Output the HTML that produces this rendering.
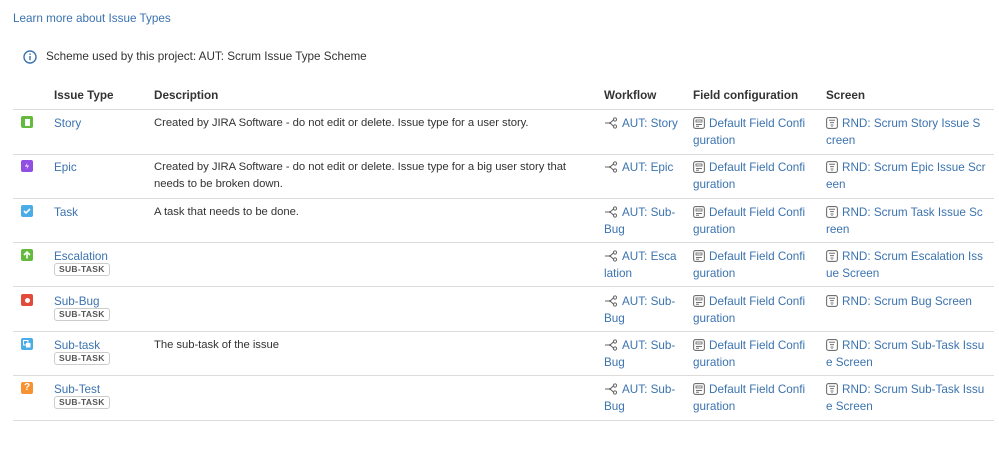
<!DOCTYPE html>
<html><head><meta charset="utf-8"><style>
body{margin:0;width:999px;height:464px;background:#fff;font-family:"Liberation Sans",Arial,sans-serif;font-size:11.7px;color:#333;position:relative;overflow:hidden}
a{color:#3b73af;text-decoration:none}
.abs{position:absolute}
.row{position:absolute;left:13px;width:981px;border-bottom:1px solid #dcdcdc;height:44px}
.c{position:absolute;top:5px;line-height:17px}
.hd{font-weight:bold;color:#333}
.ic{position:absolute;left:8px;top:6px;width:12px;height:12px;border-radius:2px}
.lz{position:absolute;left:41px;top:20px;font-size:8.5px;font-weight:bold;color:#555;border:1px solid #ccc;border-radius:3px;padding:0 4px;line-height:11px;letter-spacing:.3px}
.d{font-size:11.3px;letter-spacing:-0.05px}
.wf{left:591px;width:82px}
.fc{left:680px;width:120px}
.sc{left:813px;width:164px}
.ico{display:inline-block;vertical-align:-2px;margin-right:4px}
</style></head><body>
<div class="abs" style="left:13px;top:10px;line-height:17px"><a>Learn more about Issue Types</a></div>
<svg class="abs" style="left:23px;top:50px" width="14" height="14" viewBox="0 0 14 14"><circle cx="7" cy="7" r="6" fill="none" stroke="#3b73af" stroke-width="1.4"/><rect x="6.3" y="6" width="1.4" height="4.2" fill="#3b73af"/><rect x="6.3" y="3.5" width="1.4" height="1.4" fill="#3b73af"/></svg>
<div class="abs" style="left:46px;top:48px;line-height:17px">Scheme used by this project: AUT: Scrum Issue Type Scheme</div>
<div class="row" style="top:65px;height:44px">
<div class="c hd" style="left:41px;top:22px">Issue Type</div>
<div class="c hd" style="left:141px;top:22px">Description</div>
<div class="c hd" style="left:591px;top:22px">Workflow</div>
<div class="c hd" style="left:680px;top:22px">Field configuration</div>
<div class="c hd" style="left:813px;top:22px">Screen</div>
</div>

<svg width="0" height="0" style="position:absolute"><defs>
<symbol id="wf" viewBox="0 0 14 12"><path d="M1 6h5M6 6l4-3.5M6 6l4 3.5" stroke="#666" stroke-width="1.1" fill="none"/><circle cx="11" cy="2.5" r="1.6" fill="none" stroke="#666"/><circle cx="11" cy="9.5" r="1.6" fill="none" stroke="#666"/><circle cx="6" cy="6" r="1" fill="#666"/></symbol>
<symbol id="fc" viewBox="0 0 12 12"><rect x=".6" y=".6" width="10.8" height="10.8" rx="2" fill="none" stroke="#707070" stroke-width="1.1"/><rect x="3" y="3" width="6" height="2" fill="none" stroke="#707070" stroke-width=".9"/><path d="M3 7.5h6M3 9.3h3" stroke="#707070" stroke-width="1"/></symbol>
<symbol id="sc" viewBox="0 0 12 12"><rect x=".6" y=".6" width="10.8" height="10.8" rx="2" fill="none" stroke="#707070" stroke-width="1.1"/><path d="M3 3.2h6M4 5.6h4M4.5 8h3M5.5 9.5h1" stroke="#707070" stroke-width="1"/></symbol>
</defs></svg>

<div class="row" style="top:110px">
<div class="ic" style="background:#63ba3c"><div style="position:absolute;left:3.5px;top:2.5px;width:5px;height:7px;background:#fff"></div></div>
<div class="c" style="left:41px"><a>Story</a></div>
<div class="c d" style="left:141px">Created by JIRA Software - do not edit or delete. Issue type for a user story.</div>
<div class="c wf"><a><svg class="ico" width="14" height="12"><use href="#wf"/></svg>AUT: Story</a></div>
<div class="c fc"><a><svg class="ico" width="12" height="12"><use href="#fc"/></svg>Default Field Confi guration</a></div>
<div class="c sc"><a><svg class="ico" width="12" height="12"><use href="#sc"/></svg>RND: Scrum Story Issue S creen</a></div>
</div>

<div class="row" style="top:154px;height:44px">
<div class="ic" style="background:#904ee2"><svg width="12" height="12" style="position:absolute"><path d="M6.5 2.5L4 6.5h2.5L5.5 9.5 8 5.5H5.5z" fill="#fff"/></svg></div>
<div class="c" style="left:41px"><a>Epic</a></div>
<div class="c d" style="left:141px;width:440px">Created by JIRA Software - do not edit or delete. Issue type for a big user story that needs to be broken down.</div>
<div class="c wf"><a><svg class="ico" width="14" height="12"><use href="#wf"/></svg>AUT: Epic</a></div>
<div class="c fc"><a><svg class="ico" width="12" height="12"><use href="#fc"/></svg>Default Field Confi guration</a></div>
<div class="c sc"><a><svg class="ico" width="12" height="12"><use href="#sc"/></svg>RND: Scrum Epic Issue Scr een</a></div>
</div>

<div class="row" style="top:199px;height:43px">
<div class="ic" style="background:#4bade8"><svg width="12" height="12" style="position:absolute"><path d="M3 6l2 2 4-4" stroke="#fff" stroke-width="1.6" fill="none"/></svg></div>
<div class="c" style="left:41px"><a>Task</a></div>
<div class="c d" style="left:141px">A task that needs to be done.</div>
<div class="c wf"><a><svg class="ico" width="14" height="12"><use href="#wf"/></svg>AUT: Sub-Bug</a></div>
<div class="c fc"><a><svg class="ico" width="12" height="12"><use href="#fc"/></svg>Default Field Confi guration</a></div>
<div class="c sc"><a><svg class="ico" width="12" height="12"><use href="#sc"/></svg>RND: Scrum Task Issue Sc reen</a></div>
</div>

<div class="row" style="top:243px;height:43px">
<div class="ic" style="background:#63ba3c"><svg width="12" height="12" style="position:absolute"><path d="M6 9.5V3M3 6l3-3 3 3" stroke="#fff" stroke-width="1.6" fill="none"/></svg></div>
<div class="c" style="left:41px"><a>Escalation</a></div><div class="lz">SUB-TASK</div>
<div class="c wf"><a><svg class="ico" width="14" height="12"><use href="#wf"/></svg>AUT: Esca lation</a></div>
<div class="c fc"><a><svg class="ico" width="12" height="12"><use href="#fc"/></svg>Default Field Confi guration</a></div>
<div class="c sc"><a><svg class="ico" width="12" height="12"><use href="#sc"/></svg>RND: Scrum Escalation Iss ue Screen</a></div>
</div>

<div class="row" style="top:288px;height:43px">
<div class="ic" style="background:#e5493a"><div style="position:absolute;left:3.5px;top:3.5px;width:5px;height:5px;border-radius:50%;background:#fff"></div></div>
<div class="c" style="left:41px"><a>Sub-Bug</a></div><div class="lz">SUB-TASK</div>
<div class="c wf"><a><svg class="ico" width="14" height="12"><use href="#wf"/></svg>AUT: Sub-Bug</a></div>
<div class="c fc"><a><svg class="ico" width="12" height="12"><use href="#fc"/></svg>Default Field Confi guration</a></div>
<div class="c sc"><a><svg class="ico" width="12" height="12"><use href="#sc"/></svg>RND: Scrum Bug Screen</a></div>
</div>

<div class="row" style="top:332px;height:43px">
<div class="ic" style="background:#4bade8"><svg width="12" height="12" style="position:absolute"><rect x="2.5" y="2.5" width="4.5" height="4.5" fill="none" stroke="#fff"/><rect x="5" y="5" width="4.5" height="4.5" fill="#fff"/></svg></div>
<div class="c" style="left:41px"><a>Sub-task</a></div><div class="lz">SUB-TASK</div>
<div class="c d" style="left:141px">The sub-task of the issue</div>
<div class="c wf"><a><svg class="ico" width="14" height="12"><use href="#wf"/></svg>AUT: Sub-Bug</a></div>
<div class="c fc"><a><svg class="ico" width="12" height="12"><use href="#fc"/></svg>Default Field Confi guration</a></div>
<div class="c sc"><a><svg class="ico" width="12" height="12"><use href="#sc"/></svg>RND: Scrum Sub-Task Issu<br>e Screen</a></div>
</div>

<div class="row" style="top:376px;height:44px">
<div class="ic" style="background:#f79232;color:#fff;font-size:10px;font-weight:bold;text-align:center;line-height:12px">?</div>
<div class="c" style="left:41px"><a>Sub-Test</a></div><div class="lz">SUB-TASK</div>
<div class="c wf"><a><svg class="ico" width="14" height="12"><use href="#wf"/></svg>AUT: Sub-Bug</a></div>
<div class="c fc"><a><svg class="ico" width="12" height="12"><use href="#fc"/></svg>Default Field Confi guration</a></div>
<div class="c sc"><a><svg class="ico" width="12" height="12"><use href="#sc"/></svg>RND: Scrum Sub-Task Issu<br>e Screen</a></div>
</div>
</body></html>
